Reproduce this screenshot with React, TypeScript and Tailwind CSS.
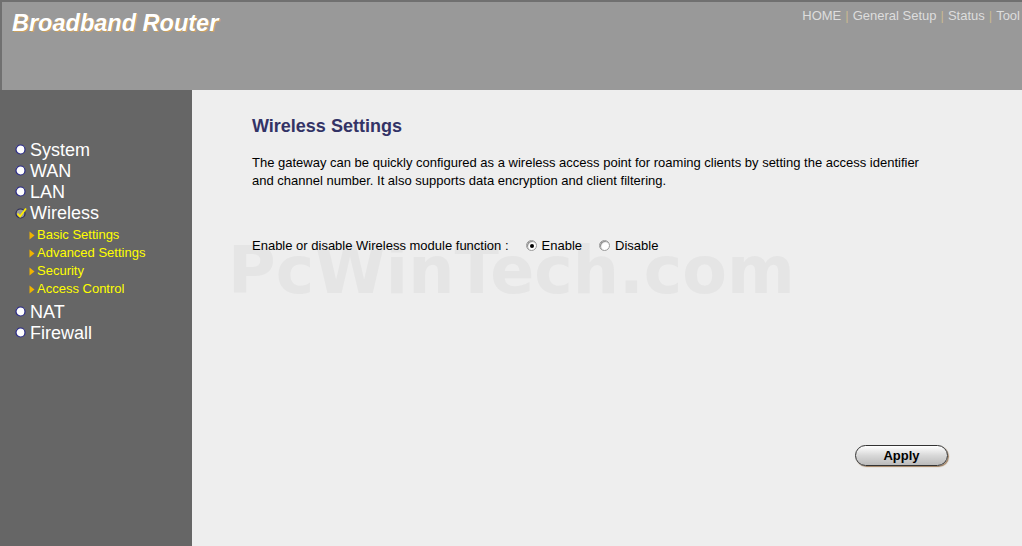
import React from 'react';

const navLinks = ['HOME', 'General Setup', 'Status', 'Tool'];
const subItems = ['Basic Settings', 'Advanced Settings', 'Security', 'Access Control'];

function Bullet() {
  return (
    <svg width="11" height="11" viewBox="0 0 11 11" className="mr-[4px] shrink-0">
      <circle cx="5.5" cy="5.5" r="4.5" fill="#ffffff" stroke="#2a2a8a" strokeWidth="1.2" />
    </svg>
  );
}

function Check() {
  return (
    <svg width="12" height="12" viewBox="0 0 12 12" className="mr-[3px] shrink-0">
      <circle cx="5.5" cy="6.5" r="4.5" fill="#9a9a9a" stroke="#2a2a5a" strokeWidth="1.2" />
      <path d="M2.5 6.5 L5 9.5 L11 1.5" fill="none" stroke="#ffee00" strokeWidth="1.8" />
    </svg>
  );
}

function Arrow() {
  return (
    <svg width="6" height="9" viewBox="0 0 6 9" className="mr-[2px] shrink-0">
      <path d="M0.5 0.5 L5.5 4.5 L0.5 8.5 Z" fill="#f0b400" />
    </svg>
  );
}

function MenuItem({ label, checked }: { label: string; checked?: boolean }) {
  return (
    <div className="flex h-[21px] items-center text-[18px] leading-none text-white">
      {checked ? <Check /> : <Bullet />}
      <span>{label}</span>
    </div>
  );
}

function Radio({ on }: { on?: boolean }) {
  return (
    <span className="relative inline-block h-[11px] w-[11px] rounded-full border border-[#999] bg-white shadow-[inset_1px_1px_1px_#888]">
      {on && <span className="absolute left-[3px] top-[3px] h-[4px] w-[4px] rounded-full bg-black" />}
    </span>
  );
}

export default function App() {
  return (
    <div className="flex h-[546px] w-[1022px] flex-col overflow-hidden font-['Liberation_Sans',Arial,sans-serif]">
      <header className="flex h-[90px] shrink-0 justify-between border-l-2 border-t-2 border-[#707070] bg-[#999999]">
        <h1 className="pl-[10px] pt-[4px] text-[23.5px] font-bold italic text-white [text-shadow:1px_1px_0_#c8a060]">
          Broadband Router
        </h1>
        <nav className="flex items-start pr-[2px] pt-[4px] text-[13px] text-[#dddddd]">
          {navLinks.map((link, i) => (
            <span key={link} className="flex">
              {i > 0 && <span className="px-[4px] text-[#c8b890]">|</span>}
              <span>{link}</span>
            </span>
          ))}
        </nav>
      </header>

      <div className="flex flex-1">
        <aside className="w-[192px] shrink-0 bg-[#666666] pl-[15px] pt-[49px]">
          <MenuItem label="System" />
          <MenuItem label="WAN" />
          <MenuItem label="LAN" />
          <MenuItem label="Wireless" checked />
          <div className="flex flex-col pl-[14px] pt-[3px] pb-[3px]">
            {subItems.map((item) => (
              <div key={item} className="flex h-[18px] items-center text-[13px] text-[#ffff00]">
                <Arrow />
                <span>{item}</span>
              </div>
            ))}
          </div>
          <MenuItem label="NAT" />
          <MenuItem label="Firewall" />
        </aside>

        <main className="relative flex-1 bg-[#eeeeee] pl-[60px] pt-[25px]">
          <h2 className="text-[18px] font-bold leading-[22px] text-[#333366]">Wireless Settings</h2>
          <p className="mt-[17px] w-[690px] text-[13px] leading-[18px] text-black">
            The gateway can be quickly configured as a wireless access point for roaming clients by setting the access identifier and channel number. It also supports data encryption and client filtering.
          </p>

          <div className="relative mt-[46px]">
            <div className="pointer-events-none absolute left-[-24px] top-[2px] select-none font-['DejaVu_Sans',sans-serif] text-[65px] font-bold leading-none text-[#e5e5e5]">
              PcWinTech.com
            </div>
            <div className="relative flex items-center text-[13px] text-black">
              <span>Enable or disable Wireless module function :</span>
              <label className="ml-[17px] flex items-center gap-[5px]">
                <Radio on />
                Enable
              </label>
              <label className="ml-[17px] flex items-center gap-[5px]">
                <Radio />
                Disable
              </label>
            </div>
          </div>

          <div className="mr-[74px] mt-[189px] flex justify-end">
            <button
              type="button"
              className="h-[21px] w-[93px] rounded-full border border-[#333] bg-[linear-gradient(#ffffff,#d8d8d8_50%,#bbbbbb)] text-[13px] font-bold text-black shadow-[1px_1px_1px_#a08060]"
            >
              Apply
            </button>
          </div>
        </main>
      </div>
    </div>
  );
}
